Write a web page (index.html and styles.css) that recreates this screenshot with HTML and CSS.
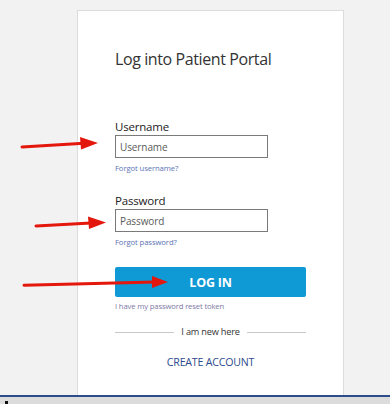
FILE: index.html
```html
<!DOCTYPE html>
<html lang="en">
<head>
<meta charset="utf-8">
<title>Log into Patient Portal</title>
<link rel="stylesheet" href="styles.css">
</head>
<body>
<div class="screen">
  <main class="stage">
    <section class="card">
      <h1 class="title">Log into Patient Portal</h1>
      <form class="form">
        <div class="field">
          <label class="label" for="u">Username</label>
          <input class="input" id="u" type="text" placeholder="Username">
          <a class="help" href="#">Forgot username?</a>
        </div>
        <div class="field">
          <label class="label" for="p">Password</label>
          <input class="input" id="p" type="password" placeholder="Password">
          <a class="help" href="#">Forgot password?</a>
        </div>
        <button class="btn" type="button">LOG IN</button>
        <a class="token" href="#">I have my password reset token</a>
        <div class="divider"><span class="rule"></span><span class="divtext">I am new here</span><span class="rule"></span></div>
        <a class="create" href="#">CREATE ACCOUNT</a>
      </form>
    </section>
  </main>
  <footer class="taskbar"><span class="tb-mark"></span></footer>
</div>
<svg class="arrows" width="390" height="404" viewBox="0 0 390 404" aria-hidden="true">
  <g fill="#e4170d" stroke="#e4170d" stroke-linecap="round">
    <line x1="22" y1="147" x2="84" y2="143.3" stroke-width="3"/>
    <polygon points="80,137 98,143 81,149.5" stroke="none"/>
    <line x1="36" y1="226" x2="91" y2="223" stroke-width="3"/>
    <polygon points="88,216.5 106,222.5 89,229" stroke="none"/>
    <line x1="24" y1="285.3" x2="155" y2="282" stroke-width="3"/>
    <polygon points="152,276 168,282 152,288" stroke="none"/>
  </g>
</svg>
</body>
</html>
```

FILE: styles.css
```css
* { box-sizing: border-box; }
html, body { margin: 0; padding: 0; }
body {
  width: 390px;
  height: 404px;
  overflow: hidden;
  background: #f2f2f2;
  font-family: "Open Sans", "Noto Sans", sans-serif;
  position: relative;
}
.screen {
  display: flex;
  flex-direction: column;
  height: 404px;
}
.stage {
  height: 395px;
  overflow: hidden;
  padding: 10px 0 0 77px;
}
.card {
  width: 267px;
  height: 400px;
  background: #fff;
  border: 1px solid #dcdcdc;
  padding: 37px 0 0 37px;
}
.title {
  margin: 0;
  font-size: 16px;
  line-height: 22px;
  font-weight: 400;
  letter-spacing: -0.4px;
  color: #333;
}
.form {
  display: flex;
  flex-direction: column;
  width: 191px;
  margin-top: 50px;
}
.field {
  display: flex;
  flex-direction: column;
  align-items: flex-start;
  margin-bottom: 21px;
}
.label {
  font-size: 11.5px;
  line-height: 14px;
  letter-spacing: -0.2px;
  color: #222;
  margin-bottom: 1px;
}
.input {
  width: 153px;
  height: 23px;
  border: 1px solid #7a7a7a;
  padding: 0 4px;
  font-family: inherit;
  font-size: 10px;
  letter-spacing: -0.1px;
  color: #333;
  outline: none;
}
.input::placeholder { color: #5a5a5a; }
.help {
  margin-top: 5px;
  font-size: 7.7px;
  line-height: 10px;
  letter-spacing: -0.1px;
  color: #5b74b5;
  text-decoration: none;
}
.btn {
  height: 30px;
  width: 191px;
  border: none;
  border-radius: 2px;
  background: #0f99d5;
  color: #fff;
  font-family: inherit;
  font-weight: 700;
  font-size: 12.5px;
  letter-spacing: -0.2px;
  padding: 0;
  margin-top: -1px;
}
.token {
  margin-top: 4px;
  font-size: 7.7px;
  line-height: 10px;
  letter-spacing: -0.15px;
  color: #7d7aa6;
  text-decoration: none;
}
.divider {
  display: flex;
  align-items: center;
  gap: 7px;
  margin-top: 15px;
}
.rule {
  flex: 1;
  height: 1px;
  background: #c8c8c8;
}
.divtext {
  font-size: 9.2px;
  line-height: 12px;
  letter-spacing: -0.2px;
  color: #333;
}
.create {
  align-self: center;
  margin-top: 17px;
  font-size: 10.6px;
  line-height: 14px;
  letter-spacing: -0.2px;
  color: #2d4b8c;
  text-decoration: none;
}
.taskbar {
  height: 9px;
  background: #dcdcdc;
  border-top: 2px solid #2b4e8a;
  position: relative;
}
.tb-mark {
  display: block;
  width: 3px;
  height: 3px;
  margin: 4px 0 0 5px;
  background: #111;
}
.arrows {
  position: absolute;
  left: 0;
  top: 0;
  pointer-events: none;
}
```
